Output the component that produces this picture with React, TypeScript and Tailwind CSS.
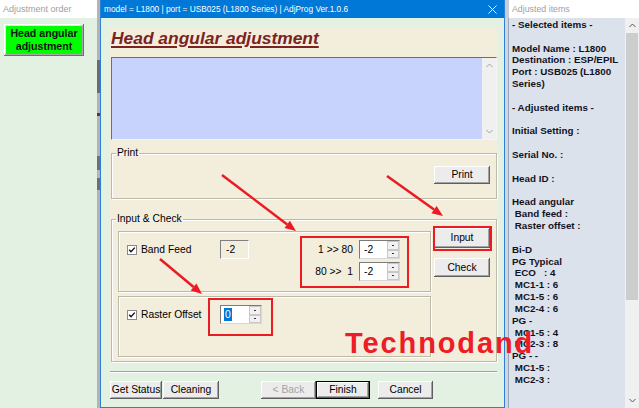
import React from "react";

const btnBase =
  "flex items-center justify-center bg-[#ececec] text-[10.3px] shadow-[inset_-1px_-1px_#5f5f5f,inset_1px_1px_#ffffff,inset_-2px_-2px_#a3a3a3]";
const btn = `${btnBase} text-black`;

const etched = "border border-[#bcb8ab] shadow-[inset_1px_1px_#ffffff,1px_1px_#ffffff]";

function Check() {
  return (
    <svg width="10" height="10" viewBox="0 0 10 10" className="shrink-0">
      <rect x="0.5" y="0.5" width="9" height="9" fill="#fff" stroke="#8a8a8a" />
      <path d="M2.2 4.8 L4 6.8 L7.8 2.6" fill="none" stroke="#111" strokeWidth="1.4" />
    </svg>
  );
}

function Spinner({ value, selected, w }: { value: string; selected?: boolean; w: string }) {
  return (
    <div className={`${w} flex h-[19px] border border-[#d8d8d8] border-t-[#7a7a7a] border-l-[#7a7a7a] bg-white`}>
      <div className="flex flex-1 items-center pl-[3px] text-[10.3px] text-black">
        {selected ? <span className="bg-[#0078d7] px-[1px] leading-[13px] text-white">{value}</span> : <span className="pl-[1px]">{value}</span>}
      </div>
      <div className="flex w-[12px] flex-col">
        <div className="flex flex-1 items-center justify-center border border-[#c8c8c8] bg-[#f1f1f1]">
          <div className="h-[1px] w-[2px] bg-[#333]" />
        </div>
        <div className="flex flex-1 items-center justify-center border border-[#c8c8c8] bg-[#f1f1f1]">
          <div className="h-[1px] w-[2px] bg-[#333]" />
        </div>
      </div>
    </div>
  );
}

const adjusted = [
  "- Selected items -",
  "",
  "Model Name : L1800",
  "Destination : ESP/EPIL",
  "Port : USB025 (L1800",
  "Series)",
  "",
  "- Adjusted items -",
  "",
  "Initial Setting :",
  "",
  "Serial No. :",
  "",
  "Head ID :",
  "",
  "Head angular",
  " Band feed :",
  " Raster offset :",
  "",
  "Bi-D",
  "PG Typical",
  " ECO   : 4",
  " MC1-1 : 6",
  " MC1-5 : 6",
  " MC2-4 : 6",
  "PG -",
  " MC1-5 : 4",
  " MC2-3 : 8",
  "PG - -",
  " MC1-5 :",
  " MC2-3 :",
];

export default function App() {
  return (
    <div className="relative flex h-[408px] w-[639px] overflow-hidden bg-[#e3f1e3] font-['Liberation_Sans',Arial,sans-serif]">
      {/* Adjustment order */}
      <div className="flex w-[97px] flex-col">
        <div className="h-[18px] bg-white pl-[3px] text-[9px] leading-[18px] text-[#a0a0a0]">Adjustment order</div>
        <div className="flex-1 bg-[#e3f1e3] pl-[4px] pt-[6px]">
          <div className="flex h-[32px] w-[80px] flex-col items-center justify-center bg-[#00ff00] text-[10.6px] font-bold leading-[13px] text-[#111] shadow-[inset_-1px_-1px_#6f6f6f,inset_1px_1px_#ffffff,inset_-2px_-2px_#a8a8a8,inset_2px_2px_#e6e6e6]">
            <span>Head angular</span>
            <span>adjustment</span>
          </div>
        </div>
      </div>
      <div className="flex w-[3px] flex-col bg-[#b4b4b4]">
        <div className="h-[60px]" />
        <div className="h-[33px] bg-[#6c6c6c]" />
        <div className="h-[20px]" />
        <div className="h-[3px] bg-[#7a2a2a]" />
        <div className="h-[40px]" />
        <div className="h-[14px] bg-[#707070]" />
        <div className="h-[8px]" />
        <div className="h-[12px] bg-[#707070]" />
      </div>

      {/* Main window */}
      <div className="flex w-[405px] flex-col border-x border-b border-[#2f7fd6]">
        <div className="flex h-[18px] items-center justify-between bg-[#0078d7] pl-[3px] pr-[7px] text-[8.3px] text-white">
          <span>model = L1800 | port = USB025 (L1800 Series) | AdjProg Ver.1.0.6</span>
          <svg width="9" height="9" viewBox="0 0 9 9">
            <path d="M0.5 0.5 L8.5 8.5 M8.5 0.5 L0.5 8.5" stroke="#fff" strokeWidth="1" />
          </svg>
        </div>
        <div className="flex flex-1 flex-col bg-[#e3f1e3] pl-[9px] pt-[9px]">
          <div className="flex h-[335px] w-[387px] flex-col bg-[#f3eddb]">
            <div className="h-[30px] pl-[1px]">
              <span className="text-[17.4px] font-bold italic leading-[18px] text-[#7b2222] underline decoration-2 underline-offset-[2px]">
                Head angular adjustment
              </span>
            </div>
            <div className="ml-[1px] flex h-[83px] w-[386px] border border-[#f4f4f4] border-l-[#6f6f6f] border-t-[#6f6f6f] bg-[#c8d3fd]">
              <div className="flex-1" />
              <div className="flex w-[14px] flex-col items-center justify-between bg-[#f0f0f0] py-[5px]">
                <svg width="7" height="5" viewBox="0 0 7 5"><path d="M0.5 4 L3.5 1 L6.5 4" fill="none" stroke="#a0a0a0" /></svg>
                <svg width="7" height="5" viewBox="0 0 7 5"><path d="M0.5 1 L3.5 4 L6.5 1" fill="none" stroke="#a0a0a0" /></svg>
              </div>
            </div>

            <fieldset className={`ml-[1px] mt-[7px] h-[52px] w-[386px] ${etched}`}>
              <legend className="ml-[4px] px-[1px] text-[10.3px] leading-[12px] text-black">Print</legend>
              <div className="flex justify-end pr-[6px] pt-[7px]">
                <div className={`${btn} h-[18px] w-[56px]`}>Print</div>
              </div>
            </fieldset>

            <fieldset className={`ml-[1px] mt-[14px] h-[149px] w-[386px] ${etched}`}>
              <legend className="ml-[4px] px-[1px] text-[10.3px] leading-[12px] text-black">Input &amp; Check</legend>
              <div className="flex pl-[6px] pt-[3px]">
                <div className="mt-[3px] flex w-[313px] flex-col gap-[4px]">
                  <div className={`flex h-[61px] items-start pl-[8px] ${etched}`}>
                    <div className="mt-[8px] flex h-[19px] items-center">
                      <Check />
                      <span className="ml-[4px] w-[79px] text-[10.3px] text-black">Band Feed</span>
                      <div className="flex h-[19px] w-[29px] items-center border border-[#ffffff] border-l-[#808080] border-t-[#808080] pl-[5px] text-[10.3px] text-black">
                        -2
                      </div>
                    </div>
                    <div className="ml-[51px] mt-[4px] flex h-[52px] w-[109px] flex-col gap-[3px] border-2 border-[#ea1b22] pt-[2px]">
                      <div className="flex items-center">
                        <span className="w-[51px] text-right text-[10.3px] text-black">1 &gt;&gt; 80</span>
                        <div className="ml-[6px]">
                          <Spinner value="-2" w="w-[41px]" />
                        </div>
                      </div>
                      <div className="flex items-center">
                        <span className="w-[51px] whitespace-pre text-right text-[10.3px] text-black">{"80 >>  1"}</span>
                        <div className="ml-[6px]">
                          <Spinner value="-2" w="w-[41px]" />
                        </div>
                      </div>
                    </div>
                  </div>
                  <div className={`flex h-[61px] items-start pl-[8px] ${etched}`}>
                    <div className="mt-[8px] flex h-[19px] items-center">
                      <Check />
                      <span className="ml-[4px] w-[67px] text-[10.3px] text-black">Raster Offset</span>
                    </div>
                    <div className="mt-[1px] border-2 border-[#ea1b22] pb-[10px] pl-[10px] pr-[9px] pt-[5px]">
                      <Spinner value="0" selected w="w-[42px]" />
                    </div>
                  </div>
                </div>
                <div className="ml-[3px] flex w-[56px] flex-col">
                  <div className="relative">
                    <div className={`${btn} h-[20px] w-[56px]`}>Input</div>
                    <div className="absolute -left-[1px] -top-[2px] h-[25px] w-[59px] border-2 border-[#ea1b22]" />
                  </div>
                  <div className={`${btn} mt-[10px] h-[19px] w-[56px]`}>Check</div>
                </div>
              </div>
            </fieldset>
          </div>

          <div className="mt-[9px] h-[2px] w-[387px] border-b border-t border-b-white border-t-[#a0a0a0]" />

          <div className="mt-[8px] flex h-[18px]">
            <div className={`${btn} w-[52px]`}>Get Status</div>
            <div className={`${btn} ml-[1px] w-[56px]`}>Cleaning</div>
            <div className={`${btnBase} ml-[42px] w-[55px] text-[#a3a3a3]`}>&lt; Back</div>
            <div className={`${btn} w-[54px] border border-black`}>Finish</div>
            <div className={`${btn} ml-[8px] w-[55px]`}>Cancel</div>
          </div>
        </div>
      </div>

      {/* Adjusted items */}
      <div className="flex w-[134px] flex-col">
        <div className="flex h-[18px]">
          <div className="w-[4px] bg-[#c6cdd8]" />
          <div className="flex-1 bg-white pl-[3px] text-[8.8px] leading-[18px] text-[#a0a0a0]">Adjusted items</div>
        </div>
        <div className="flex flex-1">
          <div className="w-[4px] border-r border-[#9aa6b6] bg-[#d0d7e2]" />
          <div className="flex-1 bg-[#dce2eb] pl-[3px] pt-[1px]">
            {adjusted.map((line, i) => (
              <div key={i} className="h-[11.83px] whitespace-pre text-[9.8px] font-bold leading-[11.83px] text-[#12121e]">
                {line}
              </div>
            ))}
          </div>
          <div className="flex w-[14px] flex-col bg-[#f0f0f0]">
            <div className="flex h-[15px] items-center justify-center">
              <svg width="7" height="5" viewBox="0 0 7 5"><path d="M0.5 4 L3.5 1 L6.5 4" fill="none" stroke="#555" /></svg>
            </div>
            <div className="mx-[1px] h-[267px] bg-[#cdcdcd]" />
            <div className="flex-1" />
            <div className="flex h-[15px] items-center justify-center">
              <svg width="7" height="5" viewBox="0 0 7 5"><path d="M0.5 1 L3.5 4 L6.5 1" fill="none" stroke="#555" /></svg>
            </div>
          </div>
        </div>
      </div>

      {/* Annotations */}
      <svg className="pointer-events-none absolute inset-0" width="639" height="408">
        <g stroke="#ea1b22" strokeWidth="2.5" fill="#ea1b22">
          <line x1="222" y1="175" x2="287.2" y2="224.4" />
          <polygon points="296,231 284.5,228 289.9,220.8" stroke="none" />
          <line x1="387" y1="176" x2="434" y2="209.6" />
          <polygon points="443,216 431.4,213.3 436.6,205.9" stroke="none" />
          <line x1="160" y1="259" x2="193.6" y2="287" />
          <polygon points="202,294 190.7,290.4 196.4,283.5" stroke="none" />
        </g>
      </svg>
      <div className="pointer-events-none absolute left-[345px] top-[329px] text-[29px] font-bold leading-[29px] tracking-[1.9px] text-[#ee1c25]">
        Technodand
      </div>
    </div>
  );
}
